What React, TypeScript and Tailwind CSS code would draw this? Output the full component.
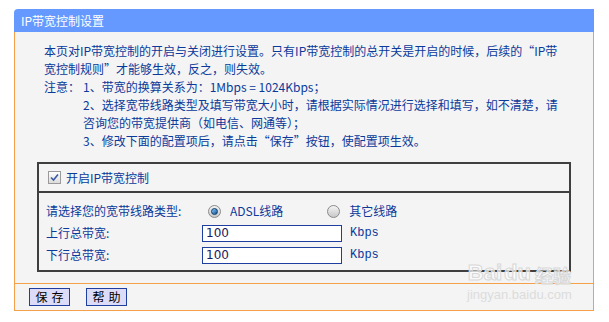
const textFont = { fontFamily: '"Noto Sans CJK SC", "DejaVu Sans", sans-serif' };

const Radio = ({ checked }: { checked?: boolean }) => (
  <span className="inline-flex w-[13px] h-[13px] rounded-full border border-[#8a8a8a] bg-gradient-to-b from-[#f4f4f4] to-[#c8c8c8] items-center justify-center">
    {checked && (
      <span className="w-[7px] h-[7px] rounded-full bg-gradient-to-br from-[#8fd0ff] to-[#0a4f8f] border border-[#0b3d6e]" />
    )}
  </span>
);

const App = () => {
  return (
    <div
      className="relative w-[609px] h-[322px] bg-white pt-[9px] pl-[14px] text-[12px] text-[#0b3a9b]"
      style={textFont}
    >
      <div className="w-[580px]">
        <div className="h-[23px] bg-[#6699ff] rounded-tl-[4px] text-white flex items-center pl-[7px] leading-none">
          IP带宽控制设置
        </div>
        <div className="bg-[#f4f4f4] border-l border-r border-b border-[#f5a04a] h-[279px] flex flex-col">
          <div className="pt-[10px] pl-[29px] leading-[18px] whitespace-nowrap">
            <div>本页对IP带宽控制的开启与关闭进行设置。只有IP带宽控制的总开关是开启的时候，后续的“IP带</div>
            <div>宽控制规则”才能够生效，反之，则失效。</div>
            <div className="flex">
              <span className="w-[39px]">注意：</span>
              <span>1、带宽的换算关系为：1Mbps = 1024Kbps；</span>
            </div>
            <div className="pl-[39px]">2、选择宽带线路类型及填写带宽大小时，请根据实际情况进行选择和填写，如不清楚，请</div>
            <div className="pl-[39px]">咨询您的带宽提供商（如电信、网通等）；</div>
            <div className="pl-[39px]">3、修改下面的配置项后，请点击“保存”按钮，使配置项生效。</div>
          </div>

          <div className="ml-[22px] mt-[12px] w-[534px] border-2 border-[#3f3f3f]">
            <div className="h-[29px] border-b-2 border-[#3f3f3f] flex items-center pl-[9px] gap-[5px]">
              <span className="w-[13px] h-[13px] border border-[#9a9a9a] bg-gradient-to-b from-[#ffffff] to-[#dcdcdc] flex items-center justify-center">
                <svg width="9" height="9" viewBox="0 0 9 9">
                  <path d="M1 4.5 L3.5 7 L8 1.5" stroke="#3a5aa8" strokeWidth="1.6" fill="none" />
                </svg>
              </span>
              <span>开启IP带宽控制</span>
            </div>
            <div className="pt-[7px] pb-[4px] pl-[7px]">
              <div className="h-[22px] flex items-center">
                <span className="w-[159px]">请选择您的宽带线路类型:</span>
                <span className="ml-[3px] flex items-center">
                  <Radio checked />
                  <span className="ml-[9px]">ADSL线路</span>
                </span>
                <span className="ml-[44px] flex items-center">
                  <Radio />
                  <span className="ml-[9px]">其它线路</span>
                </span>
              </div>
              <div className="h-[22px] flex items-center">
                <span className="w-[156px]">上行总带宽:</span>
                <div className="w-[140px] h-[17px] border border-[#1e3fa0] bg-white pl-[3px] text-[#1a1a60] text-[12px] leading-[15px]" style={{ fontFamily: '"DejaVu Sans", sans-serif' }}>
                  100
                </div>
                <span className="ml-[8px]" style={{ fontFamily: '"Liberation Mono", monospace' }}>Kbps</span>
              </div>
              <div className="h-[22px] flex items-center">
                <span className="w-[156px]">下行总带宽:</span>
                <div className="w-[140px] h-[17px] border border-[#1e3fa0] bg-white pl-[3px] text-[#1a1a60] text-[12px] leading-[15px]" style={{ fontFamily: '"DejaVu Sans", sans-serif' }}>
                  100
                </div>
                <span className="ml-[8px]" style={{ fontFamily: '"Liberation Mono", monospace' }}>Kbps</span>
              </div>
            </div>
          </div>

          <div className="mt-[11px] border-t border-[#f5a04a] flex-1 flex items-center pl-[14px] gap-[16px]">
            <button className="w-[41px] h-[18px] border border-[#1e3fa0] bg-[#dcdcf8] text-black text-[12px] leading-none tracking-[4px] pl-[4px]">
              保存
            </button>
            <button className="w-[41px] h-[18px] border border-[#1e3fa0] bg-[#dcdcf8] text-black text-[12px] leading-none tracking-[4px] pl-[4px]">
              帮助
            </button>
          </div>
        </div>
      </div>

      {/* watermark */}
      <div className="absolute left-[467px] top-[262px] flex flex-col items-center text-white/70 pointer-events-none">
        <div className="flex items-end gap-[2px] leading-none">
          <span className="text-[22px] font-bold" style={{ fontFamily: '"Liberation Sans", sans-serif', WebkitTextStroke: "1px #d8d8d8" }}>Bai</span>
          <span className="text-[22px] font-bold" style={{ fontFamily: '"Liberation Sans", sans-serif', WebkitTextStroke: "1px #d8d8d8" }}>du</span>
          <span className="text-[18px] font-bold ml-[2px]" style={{ WebkitTextStroke: "1px #d8d8d8" }}>经验</span>
        </div>
        <span className="text-[13px] leading-none mt-[4px] text-[#dcdcdc]" style={{ fontFamily: '"Liberation Sans", sans-serif' }}>jingyan.baidu.com</span>
      </div>
    </div>
  );
};

export default App;
